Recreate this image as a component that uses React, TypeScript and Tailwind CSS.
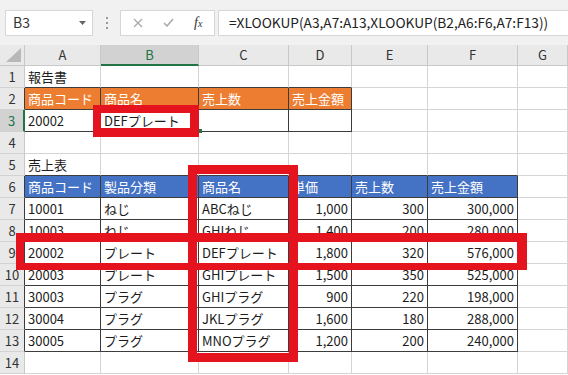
import React from 'react';

const COLS = ['A', 'B', 'C', 'D', 'E', 'F', 'G'];
const ROWS = Array.from({ length: 14 }, (_, i) => i + 1);

// 表の中身（行番号 -> 列ごとの値）
const DATA: Record<number, string[]> = {
  1: ['報告書'],
  2: ['商品コード', '商品名', '売上数', '売上金額'],
  3: ['20002', 'DEFプレート', '', ''],
  5: ['売上表'],
  6: ['商品コード', '製品分類', '商品名', '単価', '売上数', '売上金額'],
  7: ['10001', 'ねじ', 'ABCねじ', '1,000', '300', '300,000'],
  8: ['10003', 'ねじ', 'GHIねじ', '1,400', '200', '280,000'],
  9: ['20002', 'プレート', 'DEFプレート', '1,800', '320', '576,000'],
  10: ['20003', 'プレート', 'GHIプレート', '1,500', '350', '525,000'],
  11: ['30003', 'プラグ', 'GHIプラグ', '900', '220', '198,000'],
  12: ['30004', 'プラグ', 'JKLプラグ', '1,600', '180', '288,000'],
  13: ['30005', 'プラグ', 'MNOプラグ', '1,200', '200', '240,000'],
};

const inTable = (r: number, c: number) =>
  ((r === 2 || r === 3) && c <= 3) || (r >= 6 && r <= 13 && c <= 5);
const aboveTable = (r: number, c: number) => (r === 1 && c <= 3) || (r === 5 && c <= 5);

function Cell({ r, c }: { r: number; c: number }) {
  const v = DATA[r]?.[c] ?? '';
  const t = inTable(r, c);
  const border = t
    ? 'border-r-[#3c3c3c] border-b-[#3c3c3c]'
    : aboveTable(r, c)
      ? 'border-r-[#d4d4d4] border-b-[#3c3c3c]'
      : 'border-r-[#d4d4d4] border-b-[#d4d4d4]';
  const bg =
    r === 2 && t ? 'bg-[#ed7d31] text-white' : r === 6 && t ? 'bg-[#4472c4] text-white' : 'bg-white text-[#1c1c1c]';
  const num = r >= 7 && r <= 13 && c >= 3 && c <= 5;
  return (
    <div
      className={`flex items-center border-r border-b ${border} ${bg} ${num ? 'justify-end pr-[3px]' : 'pl-[3px]'} whitespace-nowrap overflow-hidden pt-[1px] text-[13px]`}
    >
      {v}
    </div>
  );
}

function RowHeader({ r }: { r: number }) {
  const sel = r === 3;
  const dark = (r === 2 || r === 3 || (r >= 6 && r <= 13));
  const right = sel ? 'border-r-2 border-r-[#217346]' : dark ? 'border-r border-r-[#3c3c3c]' : 'border-r border-r-[#c8c8c8]';
  return (
    <div
      className={`flex items-center justify-center border-b border-b-[#d2d2d2] ${right} ${sel ? 'bg-[#d2d2d2] text-[#217346]' : 'bg-[#e9e9e9] text-[#333]'} text-[13px] pt-[1px]`}
    >
      {r}
    </div>
  );
}

export default function App() {
  return (
    <div
      className="relative w-[568px] h-[375px] overflow-hidden bg-white"
      style={{ fontFamily: '"Noto Sans CJK JP", "Noto Sans", sans-serif' }}
    >
      {/* 数式バー */}
      <div className="h-[45px] bg-[#f1f1f1] flex items-center">
        <div className="ml-[5px] w-[88px] h-[26px] bg-white border border-[#d6d6d6] flex items-center justify-between pl-[7px] pr-[6px]">
          <span className="text-[14px] text-[#333]">B3</span>
          <svg width="7" height="4" viewBox="0 0 7 4">
            <path d="M0 0h7L3.5 4z" fill="#666" />
          </svg>
        </div>
        <div className="w-[27px] flex flex-col items-center gap-[3px]">
          <span className="w-[2px] h-[2px] bg-[#9a9a9a]" />
          <span className="w-[2px] h-[2px] bg-[#9a9a9a]" />
          <span className="w-[2px] h-[2px] bg-[#9a9a9a]" />
        </div>
        <div className="w-[95px] h-[26px] bg-white border border-[#d6d6d6] flex items-center">
          <svg className="ml-[12px]" width="10" height="10" viewBox="0 0 10 10">
            <path d="M1 1l8 8M9 1l-8 8" stroke="#a8a8a8" strokeWidth="1.3" />
          </svg>
          <svg className="ml-[20px]" width="11" height="9" viewBox="0 0 11 9">
            <path d="M1 5l3 3 6-7" stroke="#a8a8a8" strokeWidth="1.5" fill="none" />
          </svg>
          <span
            className="ml-[20px] text-[14px] italic text-[#333] leading-none"
            style={{ fontFamily: '"Liberation Serif", serif' }}
          >
            f<span className="text-[10px]">x</span>
          </span>
        </div>
        <div className="ml-[3px] flex-1 h-[26px] bg-white border border-r-0 border-[#d6d6d6] flex items-center pl-[10px] text-[13.7px] text-[#222] whitespace-nowrap">
          =XLOOKUP(A3,A7:A13,XLOOKUP(B2,A6:F6,A7:F13))
        </div>
      </div>

      {/* シート */}
      <div className="grid grid-cols-[25px_76px_98px_90px_63px_76px_90px_50px] grid-rows-[21px_repeat(14,22px)]">
        <div className="relative bg-[#e9e9e9] border-r border-b border-[#c8c8c8]">
          <svg className="absolute right-[3px] bottom-[3px]" width="15" height="14" viewBox="0 0 15 14">
            <path d="M15 0V14H0z" fill="#b8b8b8" />
          </svg>
        </div>
        {COLS.map((c) => (
          <div
            key={c}
            className={
              c === 'B'
                ? 'flex items-center justify-center bg-[#d2d2d2] text-[#217346] border-r border-r-[#c8c8c8] border-b-2 border-b-[#217346] text-[13px]'
                : 'flex items-center justify-center bg-[#e9e9e9] text-[#333] border-r border-r-[#c8c8c8] border-b border-b-[#c8c8c8] text-[13px]'
            }
          >
            {c}
          </div>
        ))}
        {ROWS.map((r) => (
          <React.Fragment key={r}>
            <RowHeader r={r} />
            {COLS.map((_, c) => (
              <Cell key={c} r={r} c={c} />
            ))}
          </React.Fragment>
        ))}
      </div>

      {/* フィルハンドル */}
      <div className="absolute left-[198px] top-[129px] w-[4px] h-[4px] bg-[#217346]" />

      {/* 赤枠 */}
      <div className="absolute left-[93px] top-[105px] w-[106px] h-[32px] border-t-8 border-l-8 border-r-[9px] border-b-[9px] border-[#e5131d]" />
      <div className="absolute left-[188px] top-[165px] w-[110px] h-[197px] border-[9px] border-[#e5131d]" />
      <div className="absolute left-[16px] top-[233px] w-[511px] h-[37px] border-t-[9px] border-l-8 border-r-[10px] border-b-[7px] border-[#e5131d]" />
    </div>
  );
}
